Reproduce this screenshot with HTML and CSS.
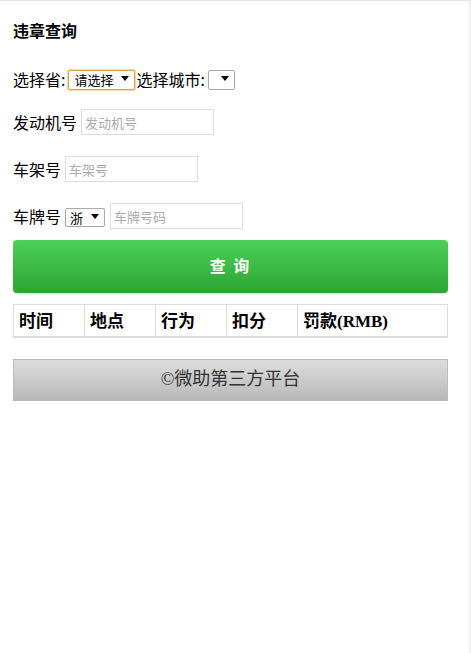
FILE: index.html
```html
<!DOCTYPE html>
<html lang="zh-CN">
<head>
    <meta charset="UTF-8">
    <meta name="viewport" content="width=device-width, initial-scale=1.0">
    <title>违章查询</title>
    <link rel="stylesheet" href="styles.css">
</head>
<body>
    <div class="page">
        <h3 class="title">违章查询</h3>
        <form class="query-form">
            <div class="form-row row-area">
                <label>选择省:</label>
                <span class="select-wrap focus"><select class="sel-province"><option>请选择</option></select></span>
                <label>选择城市:</label>
                <span class="select-wrap"><select class="sel-city"><option></option></select></span>
            </div>
            <div class="form-row">
                <label>发动机号</label>
                <input type="text" class="text-input" placeholder="发动机号">
            </div>
            <div class="form-row">
                <label>车架号</label>
                <input type="text" class="text-input" placeholder="车架号">
            </div>
            <div class="form-row">
                <label>车牌号</label>
                <span class="select-wrap"><select class="sel-plate"><option>浙</option></select></span>
                <input type="text" class="text-input" placeholder="车牌号码">
            </div>
            <button type="button" class="btn-query">查 询</button>
        </form>
        <table class="result-table">
            <tr>
                <th class="col">时间</th>
                <th class="col">地点</th>
                <th class="col">行为</th>
                <th class="col">扣分</th>
                <th>罚款(RMB)</th>
            </tr>
        </table>
        <div class="footer">©微助第三方平台</div>
    </div>
</body>
</html>
```

FILE: styles.css
```css
html, body {
    margin: 0;
    padding: 0;
    background-color: #fff;
}
body {
    font-family: 'Noto Sans CJK SC', 'DejaVu Sans', sans-serif;
    color: #000;
}
.page {
    width: 435px;
    min-height: 652px;
    padding: 0 21px 0 13px;
    border-top: 1px solid #e6e6e6;
    border-right: 2px solid #efefef;
}
.title {
    margin: 0;
    padding-top: 19px;
    height: 20px;
    line-height: 20px;
    font-size: 16px;
    font-weight: bold;
}
.query-form {
    margin-top: 29px;
}
.form-row {
    display: flex;
    align-items: center;
    height: 26px;
    margin-bottom: 21px;
    font-size: 16px;
    line-height: 20px;
}
.form-row.row-area {
    height: 20px;
    margin-bottom: 20px;
}
.form-row label {
    margin-right: 4px;
}
.row-area label {
    margin-right: 3px;
}
.select-wrap {
    position: relative;
    display: inline-block;
    margin-right: 1px;
}
.select-wrap::after {
    content: '';
    position: absolute;
    right: 6px;
    top: 8px;
    border-left: 4px solid transparent;
    border-right: 4px solid transparent;
    border-top: 5px solid #000;
    pointer-events: none;
}
.select-wrap select {
    appearance: none;
    -webkit-appearance: none;
    height: 20px;
    margin: 0;
    padding: 0 0 0 5px;
    font-family: inherit;
    font-size: 13px;
    line-height: 18px;
    color: #000;
    background: #fff;
    border: 1px solid #a9a9a9;
    border-radius: 2px;
}
.select-wrap.focus select {
    border-color: #e0a244;
    box-shadow: 0 0 0 1px #f0d8a8;
}
.sel-province {
    width: 67px;
}
.sel-city {
    width: 27px;
}
.sel-plate {
    width: 40px;
    height: 19px !important;
    padding-left: 4px !important;
}
.text-input {
    width: 133px;
    height: 26px;
    box-sizing: border-box;
    margin: 0;
    padding: 0 3px;
    font-family: inherit;
    font-size: 13px;
    border: 1px solid #ddd;
    outline: none;
}
.text-input::placeholder {
    color: #aaa;
}
.select-wrap + .text-input {
    margin-left: 4px;
}
.form-row:last-of-type {
    margin-bottom: 11px;
}
.btn-query {
    display: block;
    width: 435px;
    height: 53px;
    margin: 0;
    padding: 0 0 3px;
    border: none;
    border-radius: 4px;
    background: linear-gradient(to bottom, #4bd055, #2da436);
    color: #fff;
    font-family: inherit;
    font-size: 16px;
    font-weight: bold;
    letter-spacing: 2px;
    box-shadow: 0 1px 2px rgba(0,0,0,0.15);
}
.result-table {
    width: 435px;
    margin-top: 11px;
    border-collapse: collapse;
    border: 1px solid #ddd;
    border-bottom-width: 2px;
}
.result-table th {
    height: 29px;
    padding: 0 0 2px 5px;
    text-align: left;
    font-family: 'Liberation Serif', 'Noto Sans CJK SC', serif;
    font-size: 17px;
    font-weight: bold;
    border: 1px solid #ddd;
    border-bottom-width: 2px;
}
.result-table th.col {
    width: 65px;
}
.footer {
    margin-top: 21px;
    height: 40px;
    line-height: 38px;
    text-align: center;
    font-family: 'Liberation Serif', 'Noto Sans CJK SC', serif;
    font-size: 18px;
    color: #333;
    border: 1px solid #bbb;
    background: linear-gradient(to bottom, #ddd, #b8b8b8);
}
```
